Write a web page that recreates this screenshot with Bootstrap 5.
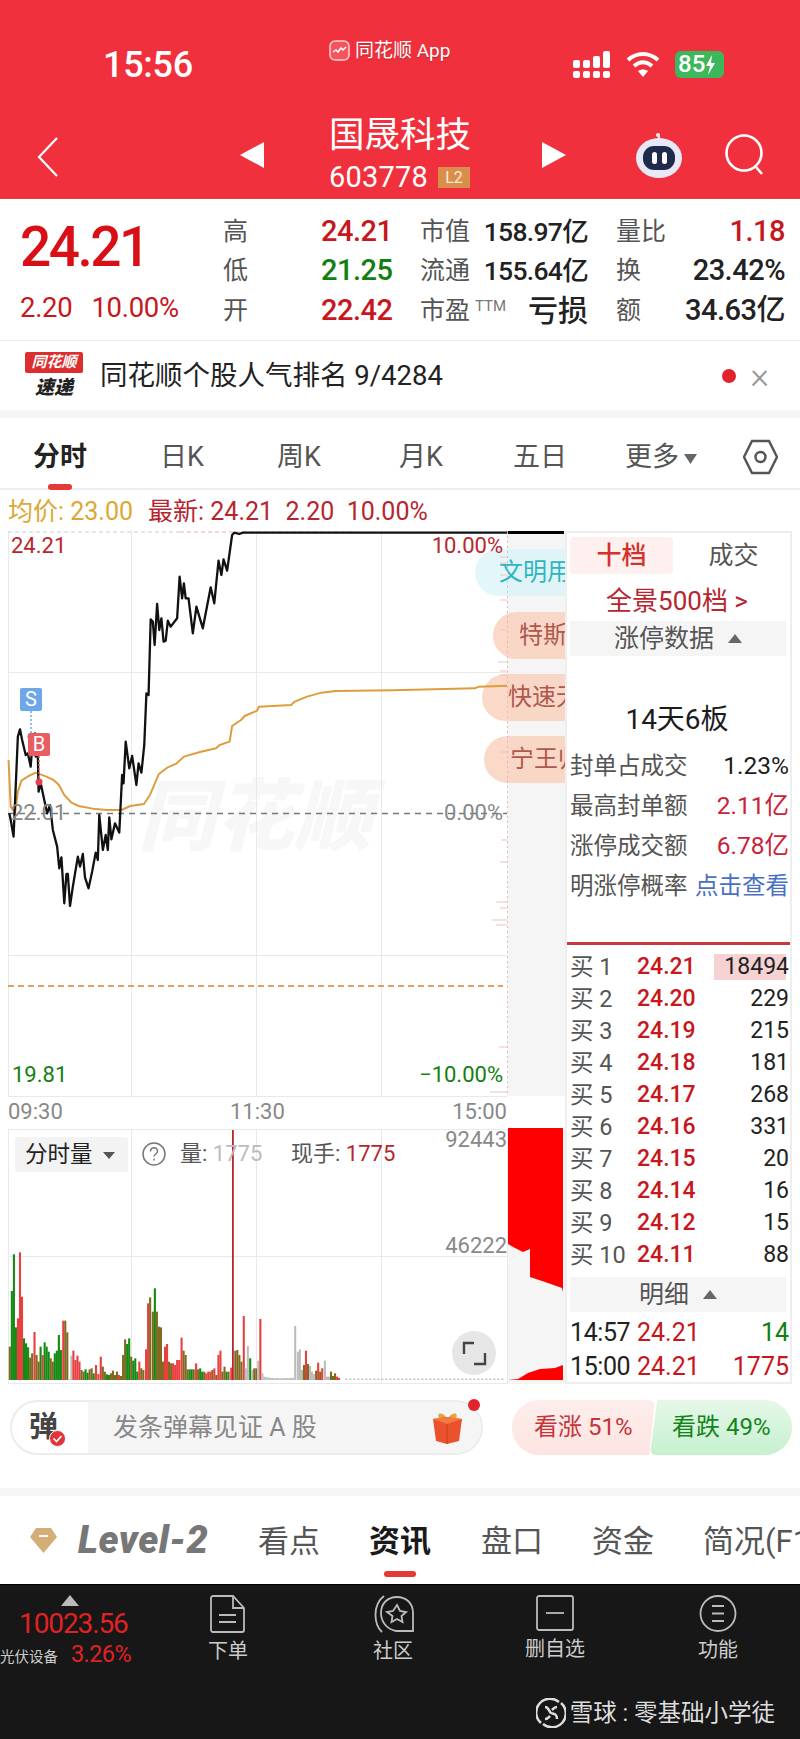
<!DOCTYPE html>
<html lang="zh-CN">
<head>
<meta charset="UTF-8">
<title>国晟科技 603778</title>
<meta name="viewport" content="width=device-width, initial-scale=1">
<link href="https://cdn.jsdelivr.net/npm/bootstrap@5.3.0/dist/css/bootstrap.min.css" rel="stylesheet">
<style>
    :root {
        --app-red: #f0313d;
        --up-red: #c8161d;
        --dim-red: #b8252e;
        --down-green: #127f12;
        --label-gray: #555;
        --strip-gray: #f5f5f5;
    }

    html, body { background: #fff; }

    body {
        width: 800px;
        height: 1739px;
        overflow: hidden;
        font-family: Roboto, "Noto Sans CJK SC", sans-serif;
        color: #222;
    }

    /* header */
    .app-head { height: 199px; background: var(--app-red); color: #fff; border-bottom: 1px solid #d9444c; }
    .status-line { height: 100px; padding: 0 76px 0 103px; }
    .status-time { font-size: 36px; font-weight: 500; width: 88px; margin-top: 47px; line-height: 1; letter-spacing: -.3px; }
    .status-app { margin-left: 138px; margin-top: 40px; font-size: 19px; line-height: 1; gap: 5px; text-shadow: 0 1px 1px rgba(120, 0, 0, .4); }
    .status-right { margin-left: auto; margin-top: 51px; gap: 15px; }
    .batt-pill { width: 49px; height: 27px; border-radius: 6px; background: #3cb85c; font-size: 24px; font-weight: 500; line-height: 27px; padding-left: 3px; gap: 0; }
    .title-line { height: 99px; padding-left: 37px; }
    .stock-block { width: 278px; padding-left: 65px; padding-top: 15px; }
    .stock-name { font-size: 35.5px; line-height: 40px; margin-top: 0; }
    .stock-code { font-size: 29px; line-height: 34px; margin-top: 5px; letter-spacing: .2px; gap: 10px; }
    .l2-tag { width: 32px; height: 21px; background: #d98f4b; font-size: 16px; line-height: 21px; text-align: center; color: #ffe9d6; letter-spacing: 0; }
    .nav-arrow { height: 84px; margin-top: 13px; }

    /* quote numbers */
    .quote-band { height: 141px; }
    .price-side { width: 223px; padding: 23px 0 0 20px; }
    .price-big { font-size: 55px; font-weight: 500; line-height: 50px; color: #d80f16; letter-spacing: -2.5px; }
    .price-sub { font-size: 27.5px; line-height: 30px; color: var(--up-red); margin-top: 21px; gap: 19px; letter-spacing: -.3px; }
    .quote-row { display: grid; grid-template-columns: 98px 99px 168px 197px; height: 39px; align-items: center; font-size: 29px; font-weight: 500; letter-spacing: -.5px; }
    .quote-rows { padding-top: 11px; }
    .q-lab { font-size: 25px; font-weight: 400; color: var(--label-gray); letter-spacing: 0; }
    .q-cell { display: flex; justify-content: space-between; align-items: center; }
    .q-last { padding-left: 28px; }
    .q-cap { font-size: 26.5px; letter-spacing: -.7px; }
    .q-ttm { font-size: 15px; font-weight: 400; color: #777; vertical-align: 8px; margin-left: 5px; }
    .q-loss { font-size: 30px; font-weight: 500; letter-spacing: 0; }
    .col-red { color: var(--up-red); }
    .col-green { color: var(--down-green); }

    /* news strip */
    .news-band { height: 70px; padding-left: 25px; padding-right: 31px; border-top: 1px solid #eee; }
    .news-logo { width: 58px; height: 47px; }
    .logo-tag { background: #dc2e2e; color: #fff; font-size: 15px; font-weight: 700; font-style: italic; line-height: 21px; height: 21px; text-align: center; border-radius: 2px; }
    .logo-sub { font-size: 19px; font-weight: 900; font-style: italic; line-height: 24px; text-align: center; color: #222; margin-top: 3px; }
    .news-text { font-size: 27.5px; margin-left: 17px; color: #222; white-space: nowrap; }
    .news-dot { width: 14px; height: 14px; border-radius: 50%; background: #e2232b; margin-left: auto; }
    .news-x { font-size: 36px; color: #999; margin-left: 14px; line-height: 1; font-weight: 300; }
    .gray-gap { height: 8px; background: var(--strip-gray); }

    /* period tabs */
    .period-tabs { height: 72px; border-bottom: 2px solid #eee; }
    .period-tab { position: absolute; top: 19px; font-size: 27px; line-height: 40px; color: #555; white-space: nowrap; }
    .period-tab.on { color: #222; font-weight: 700; }
    .tab-bar { position: absolute; height: 6px; border-radius: 3px; background: #e53935; }
    .info-line { height: 41px; padding-left: 8px; font-size: 25px; line-height: 44px; gap: 15px; white-space: nowrap; }
    .info-avg { color: #dca832; }
    .info-new { color: var(--dim-red); }

    /* chart canvas */
    .chart-side { width: 565px; height: 853px; }
    .chart-svg { position: absolute; left: 0; top: 0; }
    .strip-bg { position: absolute; left: 507px; width: 58px; background: var(--strip-gray); }
    .c-lab { position: absolute; font-size: 22px; line-height: 26px; white-space: nowrap; }
    .c-gray { color: #888; }
    .c-dim { color: var(--dim-red); }
    .c-right { right: 62px; }
    .mark-box { position: absolute; width: 22px; height: 23px; border-radius: 2px; color: #fff; font-size: 20px; line-height: 23px; text-align: center; }
    .watermark { position: absolute; left: 138px; top: 248px; font-size: 78px; font-weight: 900; font-style: italic; color: #f7f7f7; line-height: 1; white-space: nowrap; }
    .float-pill { position: absolute; right: 0; width: 90px; height: 47px; border-radius: 24px 0 0 24px; font-size: 24px; line-height: 47px; overflow: hidden; white-space: nowrap; background: rgba(250, 208, 186, .8); color: #b0574e; }
    .float-pill.cyan { background: rgba(215, 243, 249, .7); color: #2fb5c2; }
    .vol-chip { position: absolute; left: 15px; top: 606px; width: 113px; height: 35px; background: #f3f3f3; border-radius: 3px; font-size: 22.5px; line-height: 35px; padding-left: 10px; color: #222; }
    .chip-caret { display: inline-block; width: 0; height: 0; border-left: 6px solid transparent; border-right: 6px solid transparent; border-top: 7px solid #555; margin-left: 10px; vertical-align: 3px; }
    .expand-btn { position: absolute; left: 452px; top: 800px; width: 44px; height: 44px; border-radius: 50%; background: rgba(222, 222, 222, .75); }

    /* order panel */
    .order-side { width: 227px; height: 853px; border: 2px solid #eee; padding-left: 3px; padding-right: 1px; }
    .mode-tabs { margin-top: 4px; height: 37px; font-size: 25px; line-height: 37px; text-align: center; padding-right: 5px; }
    .mode-on { width: 103px; background: #fdf0ee; border-radius: 4px; color: #d4302c; font-weight: 500; }
    .mode-off { flex: 1; color: #555; padding-left: 10px; }
    .wide-link { height: 47px; padding-top: 7px; font-size: 26px; line-height: 40px; text-align: center; color: var(--dim-red); padding-right: 5px; white-space: nowrap; }
    .fold-row { height: 35px; margin-right: 3px; background: var(--strip-gray); font-size: 25px; line-height: 35px; color: #555; gap: 14px; }
    .fold-tri { width: 0; height: 0; border-left: 7px solid transparent; border-right: 7px solid transparent; border-bottom: 9px solid #666; }
    .limit-head { font-size: 28px; font-weight: 400; line-height: 36px; text-align: center; color: #1c1c1c; margin-top: 46px; margin-bottom: 8px; padding-right: 5px; }
    .limit-row { height: 40px; font-size: 23.5px; line-height: 40px; color: #555; white-space: nowrap; }
    .limit-val { font-weight: 400; font-size: 24.5px; color: #1c1c1c; }
    .limit-val.col-red { color: #cc2238; }
    .limit-link { color: #4a6fc3; font-size: 23.5px; }
    .red-line { height: 3px; background: #c9383e; margin: 36px -1px 6px -3px; }
    .book-row { position: relative; height: 32px; font-size: 23.5px; line-height: 32px; white-space: nowrap; }
    .book-lab { width: 67px; color: #555; }
    .book-price { color: var(--up-red); font-weight: 500; font-size: 23px; }
    .book-qty { margin-left: auto; color: #222; position: relative; font-size: 23px; }
    .depth-fill { position: absolute; right: 3px; top: 3px; height: 26px; background: #f6d2d4; }
    .fold-mid { margin-top: 6px; margin-bottom: 4px; }
    .tick-row { height: 34px; font-size: 25px; line-height: 34px; }
    .tick-time { width: 67px; letter-spacing: -.4px; }

    /* comment bar */
    .comment-band { height: 104px; padding: 16px 8px 0 10px; }
    .comment-box { width: 473px; height: 55px; border: 2px solid #ececec; border-radius: 28px; overflow: hidden; }
    .comment-left { width: 76px; position: relative; font-size: 29px; font-weight: 700; color: #444; padding-left: 17px; line-height: 50px; }
    .comment-input { flex: 1; background: var(--strip-gray); font-size: 25px; line-height: 51px; color: #888; padding-left: 25px; white-space: nowrap; }
    .gift-dot { position: absolute; left: 468px; top: 15px; width: 12px; height: 12px; border-radius: 50%; background: #e2232b; }
    .vote-box { margin-left: 29px; width: 280px; height: 55px; font-size: 24px; line-height: 55px; }
    .vote-up { width: 143px; border-radius: 27px 6px 6px 27px; background: linear-gradient(#fdeeeb, #fde4e2); color: #c4353a; padding-left: 22px; clip-path: polygon(0 0, 100% 0, 96% 100%, 0 100%); }
    .vote-down { width: 142px; margin-left: -5px; border-radius: 6px 27px 27px 6px; background: linear-gradient(#e6f8e8, #c6f0cf); color: #14841c; padding-left: 22px; clip-path: polygon(5% 0, 100% 0, 100% 100%, 0 100%); }

    /* section tabs */
    .section-tabs { height: 88px; }
    .sec-tab { position: absolute; top: 24px; font-size: 31px; line-height: 44px; color: #555; white-space: nowrap; }
    .sec-tab.on { color: #1a1a1a; font-weight: 700; }
    .level-word { position: absolute; left: 78px; top: 21px; font-size: 38px; line-height: 46px; font-weight: 900; font-style: italic; color: #777; letter-spacing: .5px; }

    /* bottom bar */
    .bottom-bar { height: 155px; background: #171717; border-top: 1px solid #000; color: #ccc; }
    .index-side { position: absolute; left: 0; top: 0; width: 140px; }
    .idx-tri { position: absolute; left: 61px; top: 10px; width: 0; height: 0; border-left: 9px solid transparent; border-right: 9px solid transparent; border-bottom: 11px solid #bbb; }
    .idx-num { position: absolute; left: 19px; top: 23px; font-size: 28px; line-height: 32px; color: #e02226; letter-spacing: -1.1px; }
    .idx-name { position: absolute; left: 0; top: 63px; font-size: 14.5px; line-height: 20px; color: #ccc; white-space: nowrap; }
    .idx-pct { position: absolute; left: 71px; top: 54px; font-size: 23.5px; line-height: 30px; color: #e02226; letter-spacing: -.6px; }
    .foot-item { position: absolute; top: 10px; width: 80px; text-align: center; font-size: 20px; line-height: 26px; }
    .foot-item svg { display: block; margin: 0 auto 5px; }
    .credit-line { position: absolute; right: 25px; top: 111px; font-size: 23.5px; line-height: 34px; color: #ddd; gap: 4px; white-space: nowrap; }
</style>
</head>
<body>

<header class="app-head">
    <div class="status-line d-flex align-items-start">
        <div class="status-time">15:56</div>
        <div class="status-app d-flex align-items-center">
            <svg width="21" height="21" viewBox="0 0 21 21"><rect x="1" y="1" width="19" height="19" rx="5" fill="#f6545c" stroke="#ffd0d0" stroke-width="1.5"/><path d="M4 12l3-2 2 2 3-4 2 2 3-3" fill="none" stroke="#fff" stroke-width="1.5"/></svg>
            <span>同花顺 App</span>
        </div>
        <div class="status-right d-flex align-items-start">
            <svg width="38" height="27" viewBox="0 0 38 27" fill="#fff"><rect x="0" y="20" width="7" height="7" rx="2"/><rect x="10" y="20" width="7" height="7" rx="2"/><rect x="20" y="20" width="7" height="7" rx="2"/><rect x="30" y="20" width="7" height="7" rx="2"/><rect x="0" y="9" width="7" height="8" rx="2"/><rect x="10" y="9" width="7" height="8" rx="2"/><rect x="20" y="5" width="7" height="12" rx="2"/><rect x="30" y="0" width="7" height="17" rx="2"/></svg>
            <svg width="34" height="27" viewBox="0 0 34 27" fill="none" stroke="#fff" stroke-width="4"><path d="M2 9c9-8 21-8 30 0"/><path d="M8 15c6-5 12-5 18 0"/><path d="M17 26l-5-6c3-2 7-2 10 0z" fill="#fff" stroke="none"/></svg>
            <div class="batt-pill d-flex align-items-center">
                <span>85</span>
                <svg width="11" height="20" viewBox="0 0 11 20"><path d="M7 0L1 11h4l-2 9 7-12H6z" fill="#fff"/></svg>
            </div>
        </div>
    </div>
    <div class="title-line d-flex align-items-start">
        <svg style="margin-top:36px" width="22" height="42" viewBox="0 0 22 42" fill="none" stroke="#fff" stroke-width="2.2"><path d="M20 2L2 21l18 19"/></svg>
        <div class="nav-arrow d-flex align-items-center" style="margin-left:181px">
            <svg width="24" height="26" viewBox="0 0 24 26"><path d="M24 0v26L0 13z" fill="#fff"/></svg>
        </div>
        <div class="stock-block">
            <div class="stock-name">国晟科技</div>
            <div class="stock-code d-flex align-items-center"><span>603778</span><span class="l2-tag">L2</span></div>
        </div>
        <div class="nav-arrow d-flex align-items-center">
            <svg width="24" height="26" viewBox="0 0 24 26"><path d="M0 0v26l24-13z" fill="#fff"/></svg>
        </div>
        <svg style="margin-left:68px;margin-top:32px" width="50" height="46" viewBox="0 0 50 46">
            <path d="M25 8V4" stroke="#eee" stroke-width="2"/><circle cx="24" cy="3" r="2" fill="#eee"/>
            <ellipse cx="25" cy="26" rx="23" ry="20" fill="#e8e9f6"/>
            <rect x="9" y="14" width="32" height="24" rx="11" fill="#1f2a4d"/>
            <rect x="18" y="20" width="5" height="12" rx="2.5" fill="#fff"/><rect x="28" y="20" width="5" height="12" rx="2.5" fill="#fff"/>
        </svg>
        <svg style="margin-left:41px;margin-top:34px" width="40" height="42" viewBox="0 0 40 42" fill="none" stroke="#fff" stroke-width="2.6"><circle cx="19" cy="19" r="17.5"/><path d="M31 33l6 7"/></svg>
    </div>
</header>

<section class="quote-band d-flex">
    <div class="price-side">
        <div class="price-big">24.21</div>
        <div class="price-sub d-flex"><span>2.20</span><span>10.00%</span></div>
    </div>
    <div class="quote-rows">
        <div class="quote-row">
            <span class="q-lab">高</span><span class="col-red">24.21</span>
            <div class="q-cell"><span class="q-lab">市值</span><span class="q-cap">158.97亿</span></div>
            <div class="q-cell q-last"><span class="q-lab">量比</span><span class="col-red">1.18</span></div>
        </div>
        <div class="quote-row">
            <span class="q-lab">低</span><span class="col-green">21.25</span>
            <div class="q-cell"><span class="q-lab">流通</span><span class="q-cap">155.64亿</span></div>
            <div class="q-cell q-last"><span class="q-lab">换</span><span>23.42%</span></div>
        </div>
        <div class="quote-row">
            <span class="q-lab">开</span><span class="col-red">22.42</span>
            <div class="q-cell"><span class="q-lab">市盈<span class="q-ttm">TTM</span></span><span class="q-loss">亏损</span></div>
            <div class="q-cell q-last"><span class="q-lab">额</span><span>34.63亿</span></div>
        </div>
    </div>
</section>

<section class="news-band d-flex align-items-center">
    <div class="news-logo">
        <div class="logo-tag">同花顺</div>
        <div class="logo-sub">速递</div>
    </div>
    <div class="news-text">同花顺个股人气排名 9/4284</div>
    <div class="news-dot"></div>
    <div class="news-x">×</div>
</section>
<div class="gray-gap"></div>

<nav class="period-tabs position-relative">
    <span class="period-tab on" style="left:33px">分时</span>
    <span class="period-tab" style="left:160px">日K</span>
    <span class="period-tab" style="left:277px">周K</span>
    <span class="period-tab" style="left:399px">月K</span>
    <span class="period-tab" style="left:513px">五日</span>
    <span class="period-tab" style="left:625px">更多</span>
    <svg class="position-absolute" style="left:684px;top:36px" width="13" height="10" viewBox="0 0 13 10"><path d="M0 0h13L6.500 10z" fill="#666"/></svg>
    <svg class="position-absolute" style="left:743px;top:20px" width="35" height="38" viewBox="0 0 35 38" fill="none" stroke="#555" stroke-width="2.400"><path d="M9 3h17l8 16-8 16H9L1 19z"/><circle cx="17.500" cy="19" r="5"/></svg>
    <div class="tab-bar" style="left:48px;top:66px;width:24px"></div>
</nav>

<div class="info-line d-flex">
    <span class="info-avg">均价: 23.00</span>
    <span class="info-new">最新: 24.21&nbsp; 2.20&nbsp; 10.00%</span>
</div>

<main class="d-flex">
    <section class="chart-side position-relative">
        <div class="strip-bg" style="top:0;height:565px"></div>
        <div class="strip-bg" style="top:598px;height:255px"></div>
        <div class="watermark">同花顺</div>

        <div class="float-pill cyan" style="top:18px;padding-left:24px">文明用</div>
        <div class="float-pill" style="top:81px;width:72px;padding-left:26px">特斯</div>
        <div class="float-pill" style="top:143px;width:83px;padding-left:26px">快速无</div>
        <div class="float-pill" style="top:205px;width:81px;padding-left:26px">宁王归</div>

        <svg class="chart-svg" id="chartSvg" width="565" height="853" viewBox="0 531 565 853">
            <g stroke="#e9e9e9" stroke-width="1" fill="none">
                <path d="M8.500 531V1096M131.500 531V1096M256.500 531V1096M381.500 531V1096"/>
                <path d="M8 672.500H507M8 955.500H507M8 1096.500H507"/>
                <path d="M8.500 1129V1384M131.500 1129V1384M256.500 1129V1384M381.500 1129V1384M507.500 1129V1384"/>
                <path d="M8 1129.500H507M8 1256.500H507M8 1383.500H507"/>
            </g>
            <path d="M8 532H180" stroke="#ccc" stroke-width="1" stroke-dasharray="4 3"/>
            <path d="M180 532H355" stroke="#f0a8a8" stroke-width="1" stroke-dasharray="4 3"/>
            <path d="M8 813.500H507" stroke="#777" stroke-width="1.300" stroke-dasharray="6 5"/>
            <path d="M8 986H503" stroke="#d9822b" stroke-width="1.600" stroke-dasharray="6 4"/>
            <path d="M507.500 531V1096" stroke="#e8b8b8" stroke-width="1" stroke-dasharray="2 3"/>
            <path d="M500 557h7M500 563h7M500 575h7M500 600h7M500 630h7M498 662h9M500 671h7M500 675h7M500 752h7M501 840h6M500 862h7M496 902h11M500 908h7M492 920h15M496 925h11M499 1047h8M490 1092h17" stroke="#eec4c4" stroke-width="1.200"/>
            <rect x="508" y="531" width="56" height="3" fill="#000"/>
            <!-- avg and price lines, points kept in crop coordinates -->
            <g transform="translate(0,520) scale(.3571,.3333)" fill="none" stroke-linejoin="round">
                <polyline vector-effect="non-scaling-stroke" stroke="#dd9d3e" stroke-width="2" points="24,720 30,860 42,880 50,815 60,782 80,768 100,758 130,770 150,780 165,795 180,825 200,848 220,858 260,866 300,870 340,870 365,858 403,852 420,825 445,762 470,742 495,730 515,710 560,696 605,685 615,675 643,665 650,618 675,600 685,588 720,572 725,560 815,555 825,545 860,530 900,518 940,513 1100,511 1330,505 1340,500 1420,497"/>
                <polyline vector-effect="non-scaling-stroke" stroke="#111" stroke-width="2.300" points="26,880 30,900 38,950 44,800 50,650 56,628 62,660 72,705 78,700 86,740 90,680 98,640 100,710 106,705 108,815 114,790 122,830 132,880 140,855 148,930 160,980 166,1045 172,1012 180,1150 186,1062 190,1062 196,1158 204,1100 218,1010 224,1040 232,1002 238,1072 248,1105 258,1055 268,998 274,1020 278,885 288,990 296,945 302,990 306,892 312,958 322,910 334,938 342,765 346,790 352,665 362,745 370,708 382,795 388,730 396,758 404,675 410,520 416,525 422,298 428,305 433,375 440,252 446,330 452,295 458,365 464,362 470,302 478,320 496,295 503,170 510,235 515,190 520,235 528,235 540,340 550,260 568,325 590,202 600,250 612,122 620,165 626,118 636,152 650,45 656,38 670,42 680,38 1420,38"/>
            </g>
            <path d="M31 711V734" stroke="#6ea6ea" stroke-width="1.500" stroke-dasharray="2 2"/>
            <circle cx="31" cy="737" r="3.500" fill="#a05a90"/>
            <path d="M39 756V780" stroke="#e85c64" stroke-width="1.500" stroke-dasharray="2 2"/>
            <circle cx="39" cy="782" r="3.500" fill="#e2404a"/>
            <!-- volume bars are added below -->
            <g id="volBars"></g>
            <path d="M508 1128H563V1292L562 1288 545 1282 530 1277V1249L523 1252 515 1248 508 1244z" fill="#f00"/>
            <path d="M508 1380L518 1379 528 1373 540 1369 555 1368 563 1365V1380z" fill="#f00"/>
        </svg>

        <span class="c-lab c-dim" style="left:11px;top:2px">24.21</span>
        <span class="c-lab c-dim c-right" style="top:2px">10.00%</span>
        <span class="c-lab c-gray" style="left:11px;top:269px">22.01</span>
        <span class="c-lab c-gray c-right" style="top:269px">0.00%</span>
        <span class="c-lab col-green" style="left:12px;top:531px">19.81</span>
        <span class="c-lab col-green c-right" style="top:531px">−10.00%</span>
        <span class="c-lab c-gray" style="left:8px;top:568px">09:30</span>
        <span class="c-lab c-gray" style="left:230px;top:568px">11:30</span>
        <span class="c-lab c-gray" style="right:58px;top:568px">15:00</span>
        <span class="c-lab c-gray" style="right:58px;top:596px">92443</span>
        <span class="c-lab c-gray" style="right:58px;top:702px">46222</span>

        <div class="mark-box" style="left:20px;top:157px;background:#6ea6ea">S</div>
        <div class="mark-box" style="left:28px;top:202px;background:#e85c64">B</div>

        <div class="vol-chip">分时量<span class="chip-caret"></span></div>
        <svg class="position-absolute" style="left:142px;top:611px" width="24" height="24" viewBox="0 0 24 24" fill="none" stroke="#777" stroke-width="1.500"><circle cx="12" cy="12" r="11"/><path d="M8.500 9.500c0-5 7-5 7 0 0 2.500-3.500 2.500-3.500 5M12 16.500v2"/></svg>
        <span class="c-lab" style="left:180px;top:610px;color:#555">量: <span style="color:#bbb">1775</span></span>
        <span class="c-lab" style="left:291px;top:610px;color:#555">现手: <span class="c-dim">1775</span></span>

        <div class="expand-btn">
            <svg width="44" height="44" viewBox="0 0 44 44" fill="none" stroke="#444" stroke-width="2.400"><path d="M22 12H12V23M22 33H33V22"/></svg>
        </div>
    </section>

    <aside class="order-side">
        <div class="mode-tabs d-flex"><div class="mode-on">十档</div><div class="mode-off">成交</div></div>
        <div class="wide-link">全景500档 &gt;</div>
        <div class="fold-row d-flex justify-content-center align-items-center"><span>涨停数据</span><span class="fold-tri"></span></div>
        <div class="limit-head">14天6板</div>
        <div class="limit-row d-flex justify-content-between"><span>封单占成交</span><span class="limit-val">1.23%</span></div>
        <div class="limit-row d-flex justify-content-between"><span>最高封单额</span><span class="limit-val col-red">2.11亿</span></div>
        <div class="limit-row d-flex justify-content-between"><span>涨停成交额</span><span class="limit-val col-red">6.78亿</span></div>
        <div class="limit-row d-flex justify-content-between"><span>明涨停概率</span><span class="limit-link">点击查看</span></div>
        <div class="red-line"></div>
        <div class="book-row d-flex"><span class="depth-fill" style="width:72px"></span><span class="book-lab position-relative">买 1</span><span class="book-price position-relative">24.21</span><span class="book-qty">18494</span></div>
        <div class="book-row d-flex"><span class="book-lab">买 2</span><span class="book-price">24.20</span><span class="book-qty">229</span></div>
        <div class="book-row d-flex"><span class="book-lab">买 3</span><span class="book-price">24.19</span><span class="book-qty">215</span></div>
        <div class="book-row d-flex"><span class="book-lab">买 4</span><span class="book-price">24.18</span><span class="book-qty">181</span></div>
        <div class="book-row d-flex"><span class="book-lab">买 5</span><span class="book-price">24.17</span><span class="book-qty">268</span></div>
        <div class="book-row d-flex"><span class="book-lab">买 6</span><span class="book-price">24.16</span><span class="book-qty">331</span></div>
        <div class="book-row d-flex"><span class="book-lab">买 7</span><span class="book-price">24.15</span><span class="book-qty">20</span></div>
        <div class="book-row d-flex"><span class="book-lab">买 8</span><span class="book-price">24.14</span><span class="book-qty">16</span></div>
        <div class="book-row d-flex"><span class="book-lab">买 9</span><span class="book-price">24.12</span><span class="book-qty">15</span></div>
        <div class="book-row d-flex"><span class="book-lab">买 10</span><span class="book-price">24.11</span><span class="book-qty">88</span></div>
        <div class="fold-row fold-mid d-flex justify-content-center align-items-center"><span>明细</span><span class="fold-tri"></span></div>
        <div class="tick-row d-flex"><span class="tick-time">14:57</span><span class="col-red">24.21</span><span class="ms-auto col-green">14</span></div>
        <div class="tick-row d-flex"><span class="tick-time">15:00</span><span class="col-red">24.21</span><span class="ms-auto col-red">1775</span></div>
    </aside>
</main>

<section class="comment-band d-flex position-relative">
    <div class="comment-box d-flex">
        <div class="comment-left">弹
            <svg class="position-absolute" style="left:37px;top:28px" width="17" height="17" viewBox="0 0 17 17"><circle cx="8.500" cy="8.500" r="8" fill="#e0353a" stroke="#fff"/><path d="M4.500 8.500l3 3 5-5.500" fill="none" stroke="#fff" stroke-width="1.700"/></svg>
        </div>
        <div class="comment-input position-relative">发条弹幕见证 A 股
            <svg class="position-absolute" style="right:17px;top:9px" width="33" height="34" viewBox="0 0 33 34">
                <path d="M16 7C11 0 5 2 8 7zM17 7c5-7 11-5 8 0z" fill="#e8a43c"/>
                <path d="M2 8l14-2 15 2-3 22-12 3-11-3z" fill="#e9522c"/>
                <path d="M2 8l14 5 15-5-15-2z" fill="#f37a45"/>
                <path d="M16 13v20" stroke="#c93d1f"/>
            </svg>
        </div>
    </div>
    <span class="gift-dot"></span>
    <div class="vote-box d-flex">
        <div class="vote-up">看涨 51%</div>
        <div class="vote-down">看跌 49%</div>
    </div>
</section>
<div class="gray-gap"></div>

<nav class="section-tabs position-relative">
    <svg class="position-absolute" style="left:30px;top:32px" width="27" height="25" viewBox="0 0 27 25"><path d="M6 0h15l6 9-13.500 16L0 9z" fill="#d5ad77"/><path d="M9 8h9" stroke="#fff" stroke-width="2"/></svg>
    <span class="level-word">Level-2</span>
    <span class="sec-tab" style="left:258px">看点</span>
    <span class="sec-tab on" style="left:369px">资讯</span>
    <span class="sec-tab" style="left:481px">盘口</span>
    <span class="sec-tab" style="left:592px">资金</span>
    <span class="sec-tab" style="left:703px">简况(F10</span>
    <div class="tab-bar" style="left:384px;top:75px;width:32px"></div>
</nav>

<footer class="bottom-bar position-relative">
    <div class="index-side">
        <span class="idx-tri"></span>
        <span class="idx-num">10023.56</span>
        <span class="idx-name">光伏设备</span>
        <span class="idx-pct">3.26%</span>
    </div>
    <div class="foot-item" style="left:188px">
        <svg width="36" height="38" viewBox="0 0 36 38" fill="none" stroke="#bbb" stroke-width="1.800"><path d="M3 1h20l11 12v22a2 2 0 0 1-2 2H3a2 2 0 0 1-2-2V3a2 2 0 0 1 2-2zM23 1v12h11M9 20h17M9 27h17"/></svg>
        下单
    </div>
    <div class="foot-item" style="left:353px">
        <svg width="42" height="38" viewBox="0 0 42 38" fill="none" stroke="#bbb" stroke-width="1.800"><path d="M10 37C2 30 0 10 12 1"/><path d="M41 36H24C14 34 9 26 9 18 9 8 16 2 25 2s16 6 16 16z"/><path d="M25 10l3 6 6 1-4.500 4 1 6-5.500-3-5.500 3 1-6L15 17l6-1z"/></svg>
        社区
    </div>
    <div class="foot-item" style="left:515px">
        <svg width="40" height="36" viewBox="0 0 40 36" fill="none" stroke="#bbb" stroke-width="1.800"><rect x="2" y="1" width="36" height="34" rx="2"/><path d="M11 18h18"/></svg>
        删自选
    </div>
    <div class="foot-item" style="left:678px">
        <svg width="38" height="37" viewBox="0 0 38 37" fill="none" stroke="#bbb" stroke-width="1.800"><circle cx="19" cy="18.500" r="17.500"/><path d="M13 11h12M13 18.500h12M13 26h12"/></svg>
        功能
    </div>
    <div class="credit-line d-flex align-items-center">
        <svg width="30" height="30" viewBox="0 0 30 30" fill="none" stroke="#ddd" stroke-width="2.500"><path d="M23 4A13.500 13.500 0 0 0 5 25M7 26A13.500 13.500 0 0 0 25 5"/><path d="M9 9c4 0 4 5 6 6s6 0 6 6M9 21c3 0 4-2 5-3M21 9c-3 0-4 2-5 3"/></svg>
        <span>雪球 : 零基础小学徒</span>
    </div>
</footer>

<script>
    // volume bars, [x in crop px, top in crop px, colour key]
    const volData = "26:770:o 32:603:g 38:493:g 44:712:g 50:685:r 56:487:r 62:620:r 68:745:g 74:760:g 80:772:g 86:803:o 92:790:o 99:726:r 105:795:o 111:815:o 117:770:g 123:795:r 129:757:g 135:770:g 141:785:g 147:805:o 153:815:o 159:790:g 165:782:g 171:735:g 177:780:g 184:692:r 190:692:o 196:727:o 202:868:s 208:797:s 214:782:r 220:810:r 226:797:r 232:815:r 238:840:o 244:845:o 250:838:g 256:848:g 262:838:o 268:835:o 274:850:g 281:825:r 288:852:r 295:800:r 301:830:o 307:845:o 313:853:g 319:855:g 325:850:o 331:842:o 337:855:o 343:845:o 349:855:r 355:858:o 361:795:o 367:748:o 373:762:g 379:745:g 385:800:o 391:812:g 397:805:g 403:845:g 409:815:r 415:835:o 421:840:o 429:778:r 435:640:r 441:622:o 449:665:o 455:595:g 461:665:o 467:710:o 473:712:o 479:815:o 485:770:r 491:762:r 497:815:o 503:820:o 509:820:r 515:825:r 521:810:r 527:810:r 534:743:r 540:782:o 546:795:o 552:838:o 558:838:g 564:838:g 570:838:o 577:820:r 583:838:o 589:835:g 595:845:g 601:845:o 607:850:r 613:845:r 619:845:r 625:840:o 631:835:r 637:855:o 643:795:r 649:782:r 655:845:o 661:830:o 667:845:g 673:845:o 681:833:r 693:782:o 699:780:o 705:795:o 711:815:o 718:678:r 724:835:s 730:768:s 737:805:g 743:840:s 749:835:o 755:835:o 761:812:s 767:687:r 773:850:s 779:860:s 785:862:s 791:862:s 797:864:s 803:864:s 809:865:s 815:864:s 821:865:s 827:865:s 833:865:s 839:864:s 845:864:s 851:865:s 857:864:s 863:864:s 870:708:s 878:785:s 884:778:s 890:840:s 896:825:o 902:782:r 908:822:o 914:828:s 920:845:s 926:852:s 932:842:o 938:818:r 944:845:o 950:835:r 958:812:s 964:860:s 970:860:s 976:845:o 982:858:o 988:850:o 994:860:r 1000:864:r";
    const volColor = { r: "#e8403f", g: "#148a14", o: "#7f6a22", s: "#bdbdbd" };
    const barBox = document.getElementById("volBars");
    const svgNs = "http://www.w3.org/2000/svg";

    function addBar(x, y, w, fill) {
        const bar = document.createElementNS(svgNs, "rect");
        bar.setAttribute("x", x);
        bar.setAttribute("y", y);
        bar.setAttribute("width", w);
        bar.setAttribute("height", 1380 - y);
        bar.setAttribute("fill", fill);
        barBox.appendChild(bar);
    }

    volData.split(" ").forEach(item => {
        const [x, top, key] = item.split(":");
        addBar(+x / 2.958, 1090 + top / 3, 2.100, volColor[key]);
    });
    // long tail of tiny trades after 13:30
    for (let x = 345; x < 505; x += 4) {
        addBar(x, 1378.500, 2.500, "#ccc");
    }
    addBar(232, 1130, 1.800, "#b8252e");
</script>
<script src="https://cdn.jsdelivr.net/npm/bootstrap@5.3.0/dist/js/bootstrap.bundle.min.js"></script>
</body>
</html>
